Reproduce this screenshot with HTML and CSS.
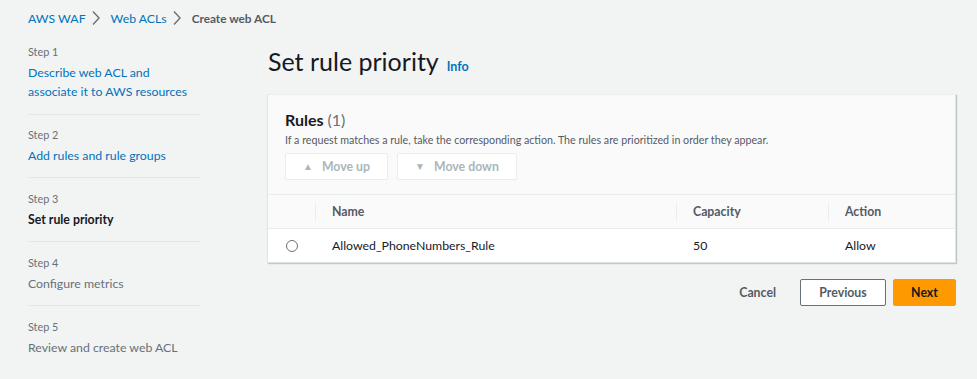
FILE: index.html
```html
<!DOCTYPE html>
<html lang="en">
<head>
	<meta charset="UTF-8">
	<title>Set rule priority</title>
	<link rel="stylesheet" href="styles.css">
</head>
<body>
<nav class="crumbs">
	<a href="#">AWS WAF</a>
	<svg class="chev" width="16" height="16" viewBox="0 0 16 16"><path d="M5 1.5l6 6.5-6 6.5" fill="none" stroke="#687078" stroke-width="1.4"/></svg>
	<a href="#">Web ACLs</a>
	<svg class="chev" width="16" height="16" viewBox="0 0 16 16"><path d="M5 1.5l6 6.5-6 6.5" fill="none" stroke="#687078" stroke-width="1.4"/></svg>
	<span class="here">Create web ACL</span>
</nav>

<div class="layout">
	<ul class="steps">
		<li>
			<small>Step 1</small>
			<a href="#">Describe web ACL and associate it to AWS resources</a>
		</li>
		<li>
			<small>Step 2</small>
			<a href="#">Add rules and rule groups</a>
		</li>
		<li>
			<small>Step 3</small>
			<b>Set rule priority</b>
		</li>
		<li>
			<small>Step 4</small>
			<span>Configure metrics</span>
		</li>
		<li>
			<small>Step 5</small>
			<span>Review and create web ACL</span>
		</li>
	</ul>

	<main>
		<h1>Set rule priority <a class="info" href="#">Info</a></h1>

		<section class="panel">
			<div class="panel-head">
				<h2>Rules <span>(1)</span></h2>
				<p>If a request matches a rule, take the corresponding action. The rules are prioritized in order they appear.</p>
				<div class="tools">
					<button class="btn-off up" disabled><i class="tri">&#9650;</i>Move up</button>
					<button class="btn-off down" disabled><i class="tri">&#9660;</i>Move down</button>
				</div>
			</div>
			<table>
				<thead>
					<tr>
						<th class="sel"></th>
						<th class="name"><span>Name</span></th>
						<th class="cap"><span>Capacity</span></th>
						<th class="act"><span>Action</span></th>
					</tr>
				</thead>
				<tbody>
					<tr>
						<td class="sel"><i class="radio"></i></td>
						<td>Allowed_PhoneNumbers_Rule</td>
						<td>50</td>
						<td>Allow</td>
					</tr>
				</tbody>
			</table>
		</section>

		<div class="actions">
			<a class="cancel" href="#">Cancel</a>
			<button class="prev">Previous</button>
			<button class="next">Next</button>
		</div>
	</main>
</div>
</body>
</html>
```

FILE: styles.css
```css
body{
	margin: 0;
	background: #f2f3f3;
	color: #16191f;
	font-family: Lato, "Liberation Sans", sans-serif;
	font-size: 12.3px;
}
a{
	color: #0073bb;
	text-decoration: none;
}

.crumbs{
	display: flex;
	align-items: center;
	height: 20px;
	padding: 8px 0 0 28px;
}
.crumbs .chev{
	margin: 0 7px 0 2px;
}
.crumbs .here{
	color: #545b64;
	font-weight: 700;
	font-size: 11.8px;
}

.layout{
	display: flex;
	padding: 16px 21px 0 28px;
}

.steps{
	list-style: none;
	margin: 0;
	padding: 0;
	width: 172px;
	flex: none;
}
.steps li{
	padding: 13px 0 12px;
	border-bottom: 1px solid #e4e7e7;
	line-height: 19px;
}
.steps li:first-child{
	padding-top: 0;
	padding-bottom: 13px;
}
.steps li:nth-child(2){
	padding-top: 12px;
}
.steps li:last-child{
	border-bottom: none;
}
.steps small{
	display: block;
	font-size: 10.8px;
	color: #687078;
	line-height: 16px;
	margin-bottom: 3px;
}
.steps span{
	color: #687078;
}
.steps b{
	color: #16191f;
}

main{
	flex: 1;
	margin-left: 67px;
}
h1{
	display: flex;
	align-items: baseline;
	gap: 8px;
	height: 34px;
	margin: 0 0 16px 1px;
	font-size: 25px;
	font-weight: 400;
	line-height: 34px;
}
h1 .info{
	font-size: 12.5px;
	font-weight: 700;
}

.panel{
	background: #fff;
	border: 1px solid #e0e3e3;
	border-top-color: #eceeee;
	box-shadow: 1px 1px 1px 0 rgba(0, 28, 36, .2);
}
.panel-head{
	background: #fafafa;
	padding: 14px 18px 14px 17px;
	border-bottom: 1px solid #eaeded;
}
h2{
	margin: 0;
	font-size: 16px;
	line-height: 22px;
}
h2 span{
	font-weight: 400;
	color: #687078;
}
.panel-head p{
	margin: 2px 0 6px;
	font-size: 10.7px;
	color: #545b64;
	line-height: 14px;
}
.tools{
	display: flex;
	gap: 9px;
}
.btn-off{
	height: 27px;
	padding: 0;
	white-space: nowrap;
	border: 1px solid #eaeded;
	border-radius: 2px;
	background: #fff;
	color: #aab7b8;
	font: 700 12.3px Lato, "Liberation Sans", sans-serif;
}
.btn-off.up{
	width: 103px;
}
.btn-off.down{
	width: 120px;
}
.btn-off .tri{
	font-style: normal;
	font-size: 10px;
	margin-right: 9px;
	vertical-align: 1px;
}

table{
	width: 100%;
	border-collapse: collapse;
}
th{
	background: #fafafa;
	height: 33px;
	padding: 0;
	text-align: left;
	font-weight: 700;
	color: #545b64;
	border-bottom: 1px solid #eaeded;
}
th span{
	display: block;
	padding-left: 16px;
	border-left: 1px solid #eaeded;
	line-height: 18px;
}
th.sel{
	width: 47px;
}
th.name{
	width: 361px;
}
th.cap{
	width: 152px;
}
td{
	height: 33px;
	padding: 0 0 0 17px;
}
td.sel{
	padding: 0 0 0 17px;
}
.radio{
	display: block;
	width: 10px;
	height: 10px;
	border: 1px solid #687078;
	border-radius: 50%;
	margin-left: 1px;
}

.actions{
	display: flex;
	justify-content: flex-end;
	align-items: center;
	margin-top: 16px;
	gap: 7px;
}
.actions button{
	height: 27px;
	border-radius: 2px;
	font: 700 12.3px Lato, "Liberation Sans", sans-serif;
}
.cancel{
	color: #545b64;
	font-weight: 700;
	margin-right: 17px;
}
.prev{
	width: 86px;
	border: 1px solid #687078;
	background: #fff;
	color: #545b64;
}
.next{
	width: 63px;
	border: 1px solid #ff9900;
	background: #ff9900;
	color: #16191f;
}
```
